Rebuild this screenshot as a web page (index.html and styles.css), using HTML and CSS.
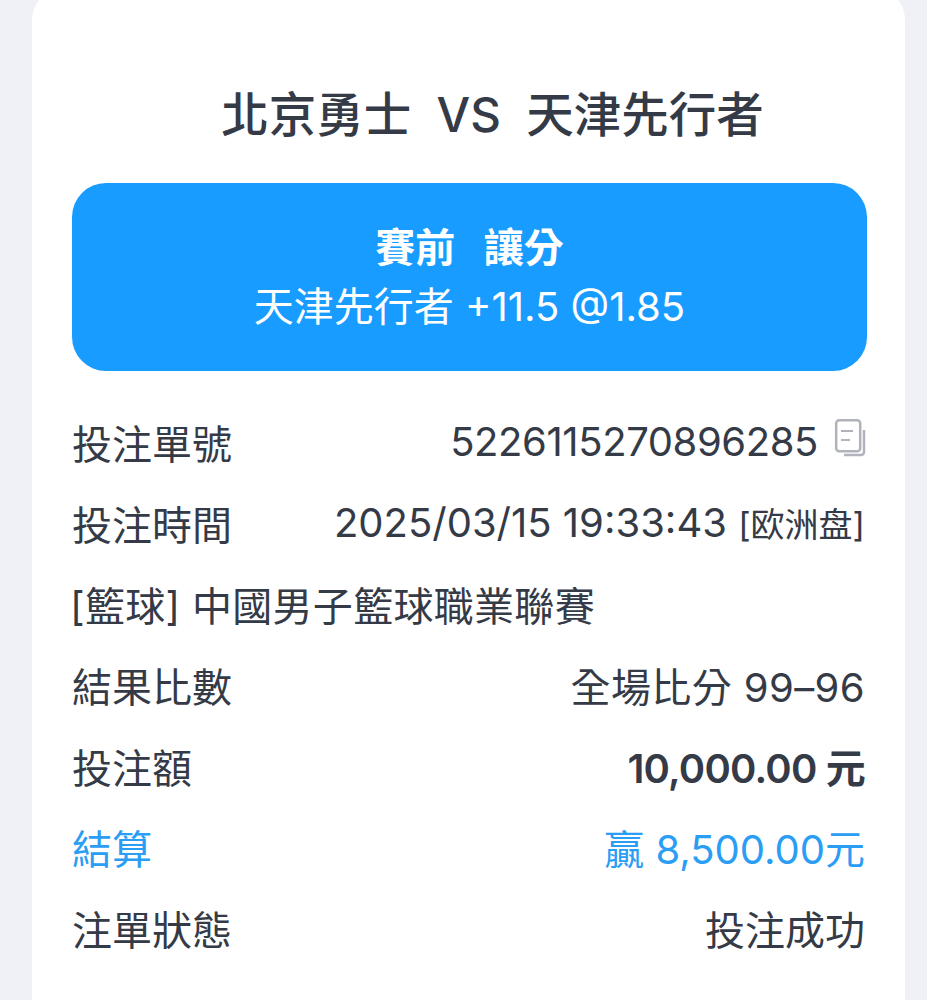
FILE: index.html
```html
<!DOCTYPE html>
<html lang="zh-Hant">
<head>
  <meta charset="UTF-8" />
  <title>注單詳情</title>
  <link rel="stylesheet" href="styles.css">
</head>
<body>
  <div class="card">
    <h1 class="match">北京勇士&nbsp; VS &nbsp;天津先行者</h1>
    <div class="bet-box">
      <div class="bet-type">賽前&nbsp;&nbsp; 讓分</div>
      <div class="bet-pick">天津先行者 +11.5 @1.85</div>
    </div>
    <div class="row">
      <span>投注單號</span>
      <span class="value-id"><span class="order-no">5226115270896285</span>
        <svg class="copy" width="32" height="40" viewBox="0 0 32 40" fill="none" stroke="#b0b3bb" stroke-width="2.5">
          <rect x="2.2" y="2.2" width="24" height="31" rx="3"/>
          <path d="M30 12v22a3 3 0 0 1-3 3H10"/>
          <path d="M7 13h12M7 22h9" stroke-width="2"/>
        </svg>
      </span>
    </div>
    <div class="row">
      <span>投注時間</span>
      <span>2025/03/15 19:33:43 <small class="market">[欧洲盘]</small></span>
    </div>
    <div class="row">
      <span class="league">[籃球] 中國男子籃球職業聯賽</span>
    </div>
    <div class="row">
      <span>結果比數</span>
      <span class="score">全場比分 99–96</span>
    </div>
    <div class="row">
      <span>投注額</span>
      <span class="amount">10,000.00 元</span>
    </div>
    <div class="row win">
      <span>結算</span>
      <span>贏 8,500.00元</span>
    </div>
    <div class="row">
      <span>注單狀態</span>
      <span>投注成功</span>
    </div>
  </div>
</body>
</html>
```

FILE: styles.css
```css
html, body {
  height: 100%;
}

body {
  margin: 0;
  background-color: #f0f0f7;
  font-family: Inter, "Noto Sans CJK TC", sans-serif;
  color: #353a47;
  overflow: hidden;
}

.card {
  box-sizing: border-box;
  width: 873px;
  height: 1040px;
  margin: -12px 0 0 32px;
  padding: 93px 38px 0 40px;
  background-color: #ffffff;
  border-radius: 32px;
}

.match {
  margin: 0 0 34px;
  padding-left: 46px;
  text-align: center;
  font-size: 47.5px;
  line-height: 68px;
  font-weight: 500;
}

.bet-box {
  height: 188px;
  margin-bottom: 30px;
  padding-top: 40px;
  box-sizing: border-box;
  background-color: #189cff;
  border-radius: 34px;
  color: #ffffff;
  text-align: center;
}

.bet-type {
  font-size: 40px;
  line-height: 50px;
  font-weight: 700;
}

.bet-pick {
  margin-top: 9px;
  font-size: 40px;
  line-height: 50px;
}

.row {
  display: flex;
  justify-content: space-between;
  align-items: center;
  height: 81px;
  padding-right: 2px;
  font-size: 40px;
  white-space: nowrap;
}

.value-id {
  display: flex;
  align-items: center;
  gap: 16px;
  margin-right: -1px;
}

.order-no {
  letter-spacing: -0.4px;
}

.copy {
  margin-top: -8px;
}

.market {
  font-size: 34px;
}

.league {
  letter-spacing: 0.3px;
  margin-left: -2px;
}

.score {
  letter-spacing: 0.4px;
}

.amount {
  font-weight: 600;
  letter-spacing: -0.8px;
}

.win {
  color: #2a9df4;
}
```
